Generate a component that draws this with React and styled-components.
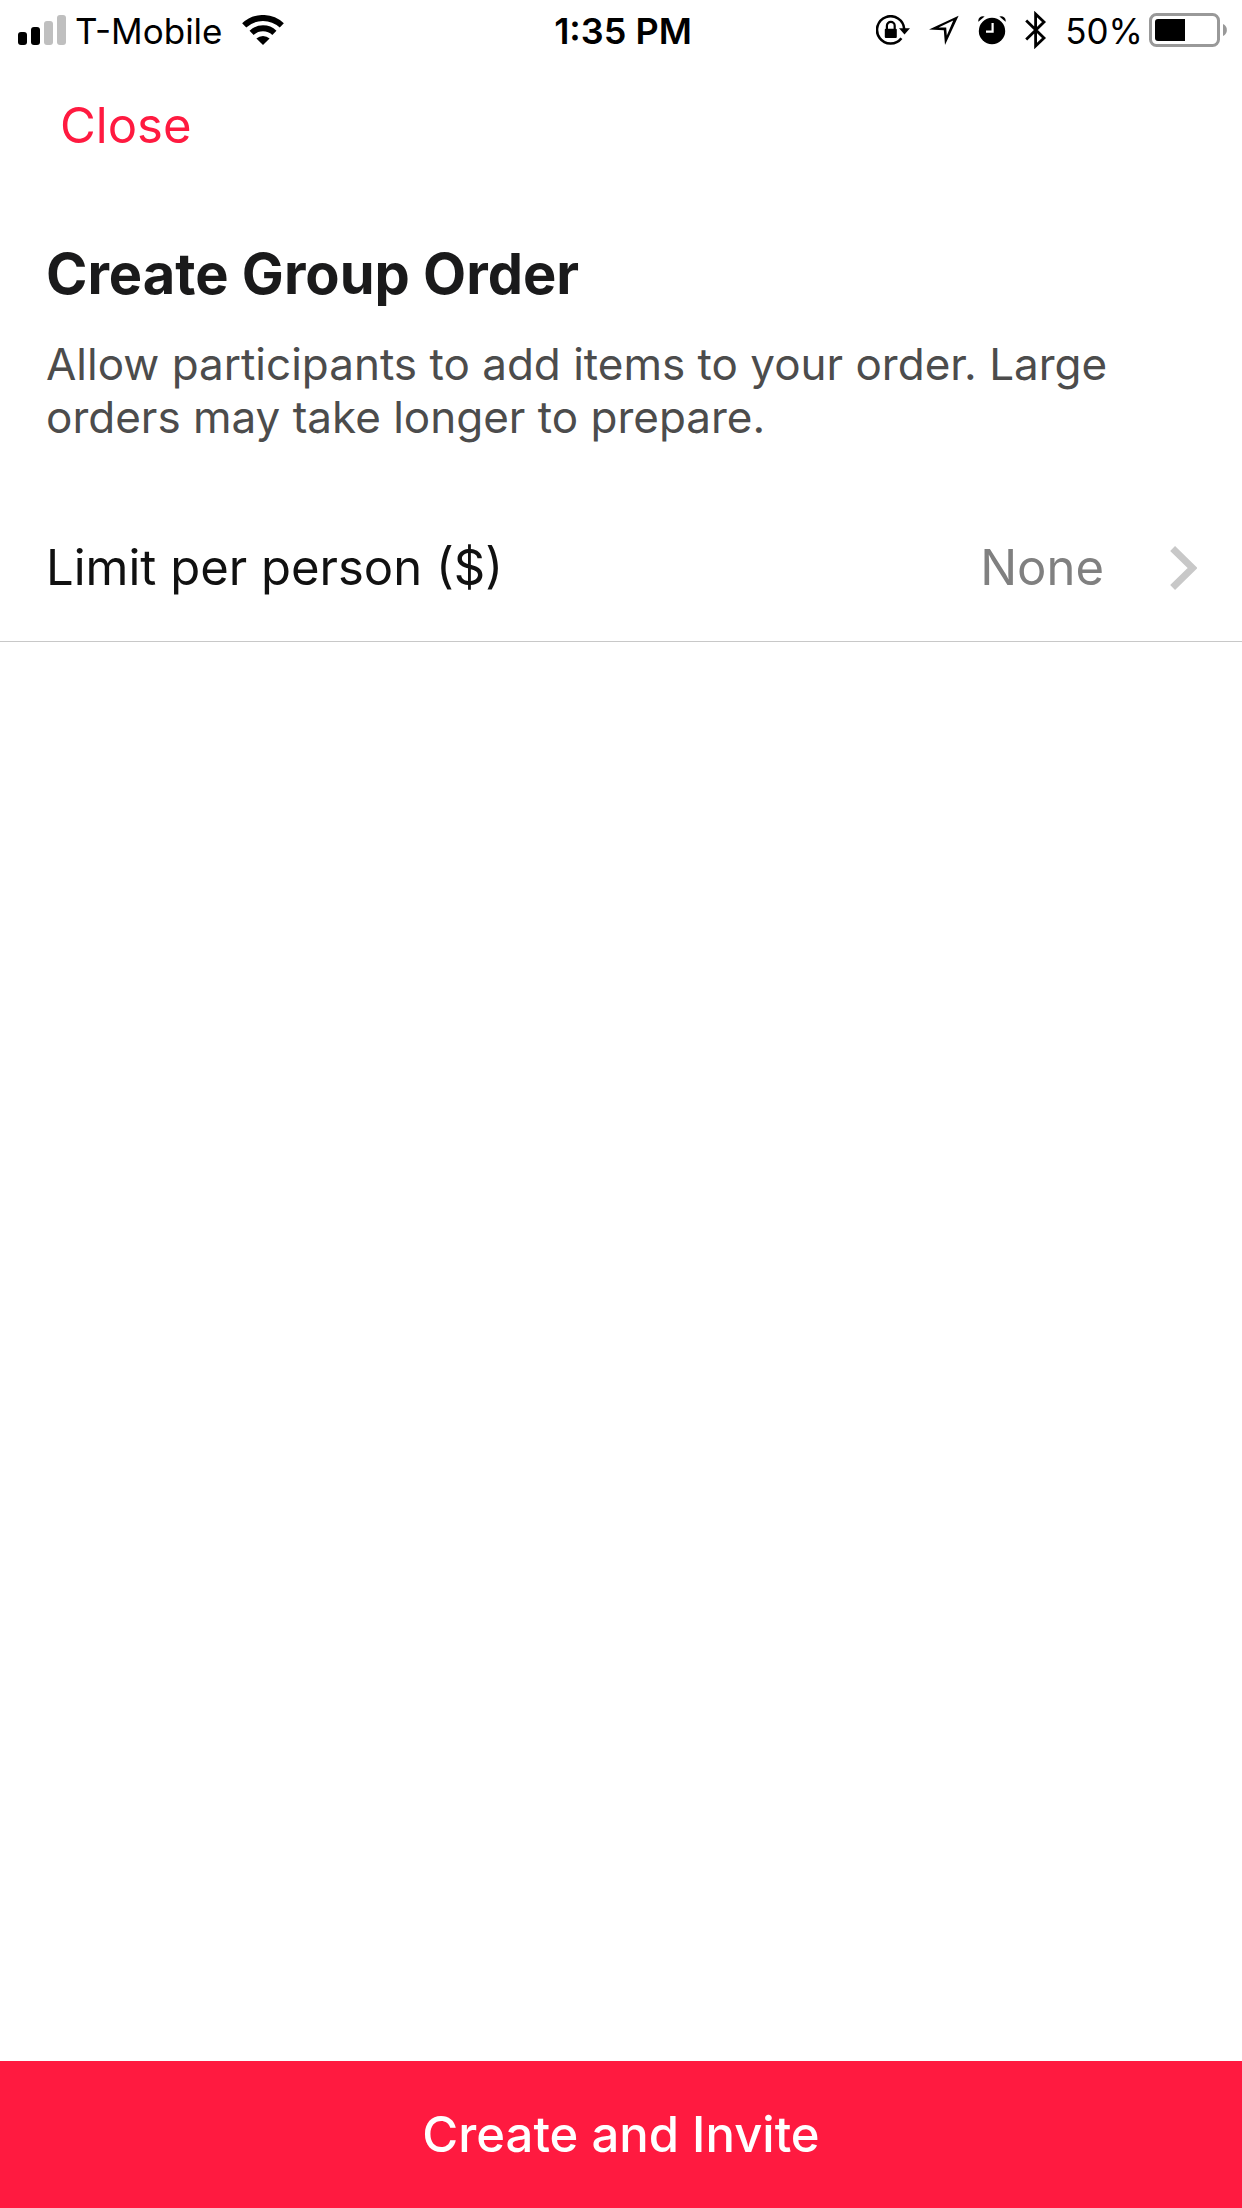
import React from 'react';
import styled, { createGlobalStyle } from 'styled-components';

const GlobalStyle = createGlobalStyle`
  * {
    box-sizing: border-box;
  }
  body {
    margin: 0;
    background: #fff;
    font-family: Inter, 'Liberation Sans', sans-serif;
  }
  h1, p {
    margin: 0;
  }
  button {
    border: 0;
    padding: 0;
    background: none;
    color: inherit;
    font: inherit;
    cursor: pointer;
  }
  svg {
    display: block;
    flex: none;
  }
`;

const Screen = styled.div`
  display: flex;
  flex-direction: column;
  min-height: 100vh;
`;

const StatusBar = styled.div`
  display: flex;
  align-items: center;
  height: 60px;
  padding: 0 14px 0 18px;
  color: #000;
  font-size: 35px;
  line-height: 44px;

  span, time {
    padding-top: 2px;
  }
`;

const StatusGroup = styled.div`
  display: flex;
  flex: 1;
  align-items: center;
  justify-content: ${({ $end }) => ($end ? 'flex-end' : 'flex-start')};
`;

const Carrier = styled.span`
  margin: 0 19px 0 9px;
`;

const Time = styled.time`
  font-size: 36px;
  font-weight: 600;
`;

const StatusIcons = styled.div`
  display: flex;
  align-items: center;
  gap: 19px;
  margin-right: 18px;
`;

const Percent = styled.span`
  margin-right: 6px;
`;

const NavBar = styled.nav`
  display: flex;
  align-items: center;
  height: 132px;
  padding: 0 60px;
`;

const CloseButton = styled.button`
  color: #ff1a40;
  font-size: 49px;
  line-height: 60px;
`;

const Intro = styled.header`
  padding: 46px 46px 0;

  h1 {
    color: #1a1a1b;
    font-size: 56px;
    font-weight: 700;
    line-height: 72px;
  }
  p {
    margin-top: 28px;
    color: #4c4c4c;
    font-size: 44px;
    line-height: 53px;
  }
`;

const OptionRow = styled.button`
  display: flex;
  align-items: center;
  width: 100%;
  height: 147px;
  margin-top: 51px;
  padding: 0 45px 0 46px;
  border-bottom: 1px solid #c8c8c8;
  color: #111;
  font-size: 49px;
  line-height: 60px;
  text-align: left;
`;

const OptionLabel = styled.span`
  flex: 1;
`;

const OptionValue = styled.span`
  margin-right: 66px;
  color: #808080;
`;

const SubmitButton = styled.button`
  width: 100%;
  height: 147px;
  margin-top: auto;
  background: #ff1a40;
  color: #fff;
  font-size: 49px;
  font-weight: 500;
  line-height: 60px;
`;

function SignalIcon() {
  return (
    <svg width="48" height="30" viewBox="0 0 48 30" aria-hidden="true">
      <rect x="0" y="17" width="9" height="13" rx="3" />
      <rect x="13" y="12" width="9" height="18" rx="3" />
      <rect x="26" y="6" width="9" height="24" rx="3" fill="#bfbfbf" />
      <rect x="39" y="0" width="9" height="30" rx="3" fill="#bfbfbf" />
    </svg>
  );
}

function WifiIcon() {
  return (
    <svg width="42" height="30" viewBox="0 0 42 30" aria-hidden="true">
      <g fill="none" stroke="#000" strokeWidth="6">
        <path d="M2.2 10.4 A27.5 27.5 0 0 1 39.8 10.4" />
        <path d="M9.6 17.8 A16.5 16.5 0 0 1 32.4 17.8" />
      </g>
      <path d="M21 30 L14.4 23.6 A9.4 9.4 0 0 1 27.6 23.6 Z" />
    </svg>
  );
}

function RotationLockIcon() {
  return (
    <svg width="34" height="30" viewBox="0 0 34 30" aria-hidden="true">
      <path d="M28.2 14 A13.6 13.6 0 1 0 25.4 23.2" fill="none" stroke="#000" strokeWidth="2.6" />
      <path d="M23 13.2 H34 L28.5 19.4 Z" />
      <rect x="8.8" y="13.8" width="12" height="9.2" rx="1" />
      <path d="M10.9 14.5 V10.8 a3.9 3.9 0 0 1 7.8 0 V14.5" fill="none" stroke="#000" strokeWidth="2.2" />
    </svg>
  );
}

function LocationIcon() {
  return (
    <svg width="30" height="30" viewBox="0 0 30 30" aria-hidden="true">
      <path
        fillRule="evenodd"
        d="M0 14.6 L29.6 0.8 L16 30 L14.8 15.2 Z M9.6 12.4 L17.2 12.6 L17.8 20.4 L24.2 5.6 Z"
      />
    </svg>
  );
}

function AlarmIcon() {
  return (
    <svg width="28" height="30" viewBox="0 0 28 30" aria-hidden="true">
      <circle cx="14" cy="16" r="13.2" />
      <path d="M14.6 8 V16.6 H8" fill="none" stroke="#fff" strokeWidth="2.2" />
      <path d="M0.4 6.8 A4.6 4.6 0 0 1 6.6 1.6 Z" />
      <path d="M27.6 6.8 A4.6 4.6 0 0 0 21.4 1.6 Z" />
    </svg>
  );
}

function BluetoothIcon() {
  return (
    <svg width="22" height="38" viewBox="0 0 22 38" aria-hidden="true">
      <path
        d="M1.2 9.6 L19 27 L10.6 35 V3 L19 11 L1.2 28.4"
        fill="none"
        stroke="#000"
        strokeWidth="2.8"
      />
    </svg>
  );
}

function BatteryIcon() {
  return (
    <svg width="79" height="34" viewBox="0 0 79 34" aria-hidden="true">
      <rect x="1.5" y="1.5" width="68" height="31" rx="6" fill="none" stroke="#999" strokeWidth="3" />
      <path d="M9 6 H36 V28 H9 a3 3 0 0 1 -3 -3 V9 a3 3 0 0 1 3 -3 Z" />
      <path d="M74 11 A6.6 6.6 0 0 1 74 23 Z" fill="#999" />
    </svg>
  );
}

function Chevron() {
  return (
    <svg width="27" height="44" viewBox="0 0 27 44" aria-hidden="true">
      <path d="M2.6 2.6 L22.6 22 L2.6 41.4" fill="none" stroke="#c8c8c8" strokeWidth="7" />
    </svg>
  );
}

function App() {
  return (
    <Screen>
      <GlobalStyle />
      <StatusBar>
        <StatusGroup>
          <SignalIcon />
          <Carrier>T-Mobile</Carrier>
          <WifiIcon />
        </StatusGroup>
        <Time>1:35 PM</Time>
        <StatusGroup $end>
          <StatusIcons>
            <RotationLockIcon />
            <LocationIcon />
            <AlarmIcon />
            <BluetoothIcon />
          </StatusIcons>
          <Percent>50%</Percent>
          <BatteryIcon />
        </StatusGroup>
      </StatusBar>

      <NavBar>
        <CloseButton type="button">Close</CloseButton>
      </NavBar>

      <main>
        <Intro>
          <h1>Create Group Order</h1>
          <p>
            Allow participants to add items to your order. Large orders may take
            longer to prepare.
          </p>
        </Intro>

        <OptionRow type="button">
          <OptionLabel>Limit per person ($)</OptionLabel>
          <OptionValue>None</OptionValue>
          <Chevron />
        </OptionRow>
      </main>

      <SubmitButton type="button">Create and Invite</SubmitButton>
    </Screen>
  );
}

export default App;
